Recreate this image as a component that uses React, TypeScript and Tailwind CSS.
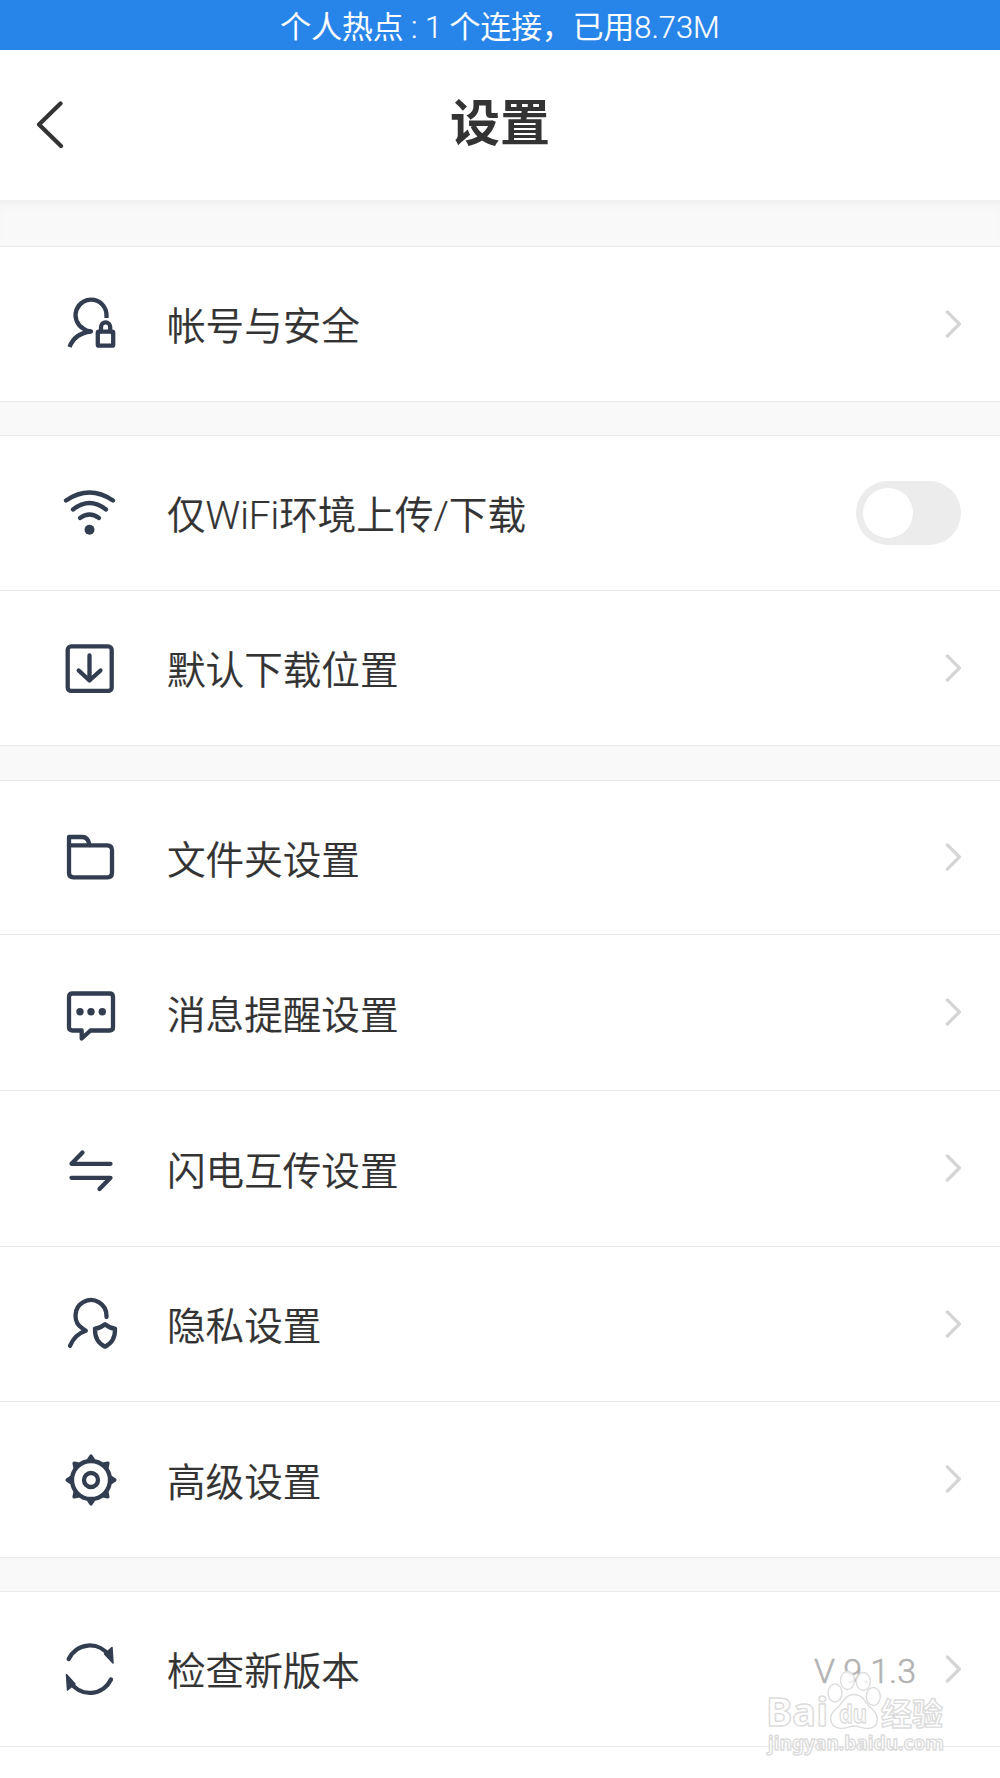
import type { ReactNode } from 'react';

type Item = {
  label: string;
  icon: ReactNode;
  height: string;
  toggle?: boolean;
  value?: string;
};

// Every icon is drawn on a 60x60 canvas
function Icon({ children }: { children: ReactNode }) {
  return (
    <svg
      viewBox="0 0 60 60"
      className="w-[60px] h-[60px] shrink-0"
      fill="none"
      stroke="#323d50"
      strokeWidth="4.3"
      strokeLinecap="round"
      strokeLinejoin="round"
    >
      {children}
    </svg>
  );
}

const AccountIcon = (
  <Icon>
    <path d="M46.5 24V22A15.5 15.5 0 1 0 23.5 34.7Q27 37 31 37.5Q15 39 9.5 53" strokeLinecap="butt" />
    <rect x="37.8" y="37.7" width="15.4" height="14" rx="1" />
    <path d="M41 37.5V33a4.6 4.6 0 0 1 9.2 0V37.5" />
  </Icon>
);

const WifiIcon = (
  <Icon>
    <path d="M6 17.5Q29.5 1.5 53 17.5" />
    <path d="M13 26.5Q29.5 13.5 46 26.5" />
    <path d="M20 35Q29.5 28 39 35" />
    <circle cx="29.5" cy="46.8" r="5" fill="#323d50" stroke="none" />
  </Icon>
);

const DownloadIcon = (
  <Icon>
    <rect x="7.7" y="8.4" width="44" height="44.5" rx="3.5" />
    <path d="M29.5 17.5V42M18.7 32.5L29.5 42.5L40.5 32.5" />
  </Icon>
);

const FolderIcon = (
  <Icon>
    <path d="M9 17.5V9H22.5Q28 9 29.5 17" />
    <path d="M9 17.3H47Q52 17.3 52 22.3V45Q52 49.3 47.5 49.3H13.5Q9 49.3 9 45Z" />
  </Icon>
);

const MessageIcon = (
  <Icon>
    <path d="M12.5 10.5H49.5Q53 10.5 53 14V44.3Q53 47.5 49.5 47.5H30.5L21.7 55.5V47.5H12.5Q9 47.5 9 44.3V14Q9 10.5 12.5 10.5Z" />
    <g fill="#323d50" stroke="none">
      <circle cx="20" cy="28.7" r="3.7" />
      <circle cx="31" cy="28.7" r="3.7" />
      <circle cx="42.3" cy="28.7" r="3.7" />
    </g>
  </Icon>
);

const TransferIcon = (
  <Icon>
    <path d="M22.5 13.5L11.5 24.8H50.5" />
    <path d="M11.5 38.8H50.5L39.5 50" />
  </Icon>
);

const PrivacyIcon = (
  <Icon>
    <path d="M46.5 23V21.8A15.5 15.5 0 1 0 22.5 34.5L25.8 36.8Q15 40.3 10 51.8" />
    <path d="M45 30.2Q50 34.2 55 34.7Q55.5 47.7 45 52.7Q34.5 47.7 35 34.7Q40 34.2 45 30.2Z" />
  </Icon>
);

const GearIcon = (
  <Icon>
    <circle cx="31" cy="30" r="19" />
    <circle cx="31" cy="30" r="7" />
    <g fill="#323d50" strokeWidth="3.5">
      {[0, 45, 90, 135, 180, 225, 270, 315].map((deg) => (
        <path key={deg} d="M28.8 9.5L31 6.2L33.2 9.5Z" transform={`rotate(${deg} 31 30)`} />
      ))}
    </g>
  </Icon>
);

const UpdateIcon = (
  <Icon>
    <path d="M8.7 20A23.5 24 0 0 1 49 16.5" />
    <path d="M51 40.5A23.5 24 0 0 1 10.5 43.5" />
    <path d="M44.5 15L52 8.5L53 24Z" fill="#323d50" strokeWidth="1.5" />
    <path d="M15 45L7.5 51L6.5 35.500Z" fill="#323d50" strokeWidth="1.5" />
  </Icon>
);

const groups: { gap: string; items: Item[] }[] = [
  {
    gap: 'h-[47px]',
    items: [{ label: '帐号与安全', icon: AccountIcon, height: 'h-[155px]' }],
  },
  {
    gap: 'h-[34px]',
    items: [
      { label: '仅WiFi环境上传/下载', icon: WifiIcon, height: 'h-[155px]', toggle: true },
      { label: '默认下载位置', icon: DownloadIcon, height: 'h-[155px]' },
    ],
  },
  {
    gap: 'h-[35px]',
    items: [
      { label: '文件夹设置', icon: FolderIcon, height: 'h-[154px]' },
      { label: '消息提醒设置', icon: MessageIcon, height: 'h-[156px]' },
      { label: '闪电互传设置', icon: TransferIcon, height: 'h-[156px]' },
      { label: '隐私设置', icon: PrivacyIcon, height: 'h-[155px]' },
      { label: '高级设置', icon: GearIcon, height: 'h-[156px]' },
    ],
  },
  {
    gap: 'h-[34px]',
    items: [{ label: '检查新版本', icon: UpdateIcon, height: 'h-[155px]', value: 'V 9.1.3' }],
  },
];

function Chevron() {
  return (
    <svg viewBox="0 0 16 28" className="w-4 h-7 shrink-0 -mt-px" fill="none" stroke="#d5d5d5" strokeWidth="3.2" strokeLinecap="round" strokeLinejoin="round">
      <path d="M2.4 2L14.4 14L2.4 26" />
    </svg>
  );
}

function Toggle() {
  return (
    <button className="w-[105px] h-16 rounded-full bg-[#ececec] pl-[7px] flex items-center">
      <span className="w-[50px] h-[50px] rounded-full bg-white" />
    </button>
  );
}

function Row({ item }: { item: Item }) {
  return (
    <div className={`${item.height} flex items-center bg-white border-b border-[#e9e9e9] pl-[60px] pr-[39px]`}>
      {item.icon}
      <span className="ml-[47px] flex-1 pt-[7px] text-[38.6px] leading-none font-[350] text-[#333] [-webkit-text-stroke:0.2px_#333]">
        {item.label}
      </span>
      {item.value && (
        <span className="mr-[29px] pt-1 text-[34px] leading-none font-[350] text-[#b2b2b2] [-webkit-text-stroke:0.5px_#b2b2b2]">
          {item.value}
        </span>
      )}
      {item.toggle ? <Toggle /> : <Chevron />}
    </div>
  );
}

function Watermark() {
  return (
    <svg
      viewBox="0 0 190 90"
      className="absolute left-[762px] top-[1668px] w-[190px] h-[90px]"
      fill="#fff"
      fillOpacity="0.8"
      stroke="#dcdcdc"
      strokeWidth="1.4"
      strokeLinejoin="round"
      fontFamily="'Noto Sans', 'Noto Sans CJK SC', sans-serif"
      fontWeight="bold"
    >
      <text x="4" y="58" fontSize="39" textLength="62" lengthAdjust="spacingAndGlyphs">Bai</text>
      <ellipse cx="73" cy="25" rx="7" ry="9" />
      <ellipse cx="85.5" cy="12.5" rx="7" ry="9" />
      <ellipse cx="101.3" cy="13.5" rx="7" ry="9" />
      <ellipse cx="111.3" cy="28.5" rx="7" ry="9" />
      <path d="M92 26.5C82 26.5 81 36 74 41C65 48 68 60 79 60.5C86 60.5 87 58 92 58C97 58 100 60.5 106 60.5C117 60 118 48 110 41C103 36 102 26.5 92 26.5Z" />
      <text x="77" y="54.5" fontSize="25" textLength="28" lengthAdjust="spacingAndGlyphs">du</text>
      <text x="119" y="57" fontSize="31">经验</text>
      <text x="6" y="82" fontSize="19.5" textLength="176" lengthAdjust="spacingAndGlyphs">jingyan.baidu.com</text>
    </svg>
  );
}

export default function App() {
  return (
    <div className="relative w-[1000px] h-[1778px] overflow-hidden bg-white font-[Roboto,'Noto_Sans_CJK_SC',sans-serif]">
      <div className="h-[50px] pt-1.5 flex items-center justify-center bg-[#2784e9] text-white text-[30.8px] leading-none font-[350] whitespace-pre [-webkit-text-stroke:0.2px_#fff]">
        个人热点 : 1 个连接，已用8.73M
      </div>

      <header className="h-[150px] px-9 pb-[3px] grid grid-cols-[1fr_auto_1fr] items-center bg-white">
        <svg viewBox="0 0 28 48" className="w-7 h-12" fill="none" stroke="#333" strokeWidth="4.2" strokeLinecap="round" strokeLinejoin="round">
          <path d="M24.5 3.5L3 24.5L25 46" />
        </svg>
        <h1 className="font-['Noto_Sans_CJK_SC',sans-serif] text-[50px] leading-none font-bold text-[#333] -mt-2.5">设置</h1>
      </header>

      {groups.map((group, index) => (
        <section key={index}>
          <div className={`${group.gap} bg-[#f9f9f9] border-b border-[#e9e9e9] ${index === 0 ? 'shadow-[inset_0_9px_8px_-5px_#eeeeee]' : ''}`} />
          {group.items.map((item) => (
            <Row key={item.label} item={item} />
          ))}
        </section>
      ))}

      <Watermark />
    </div>
  );
}
